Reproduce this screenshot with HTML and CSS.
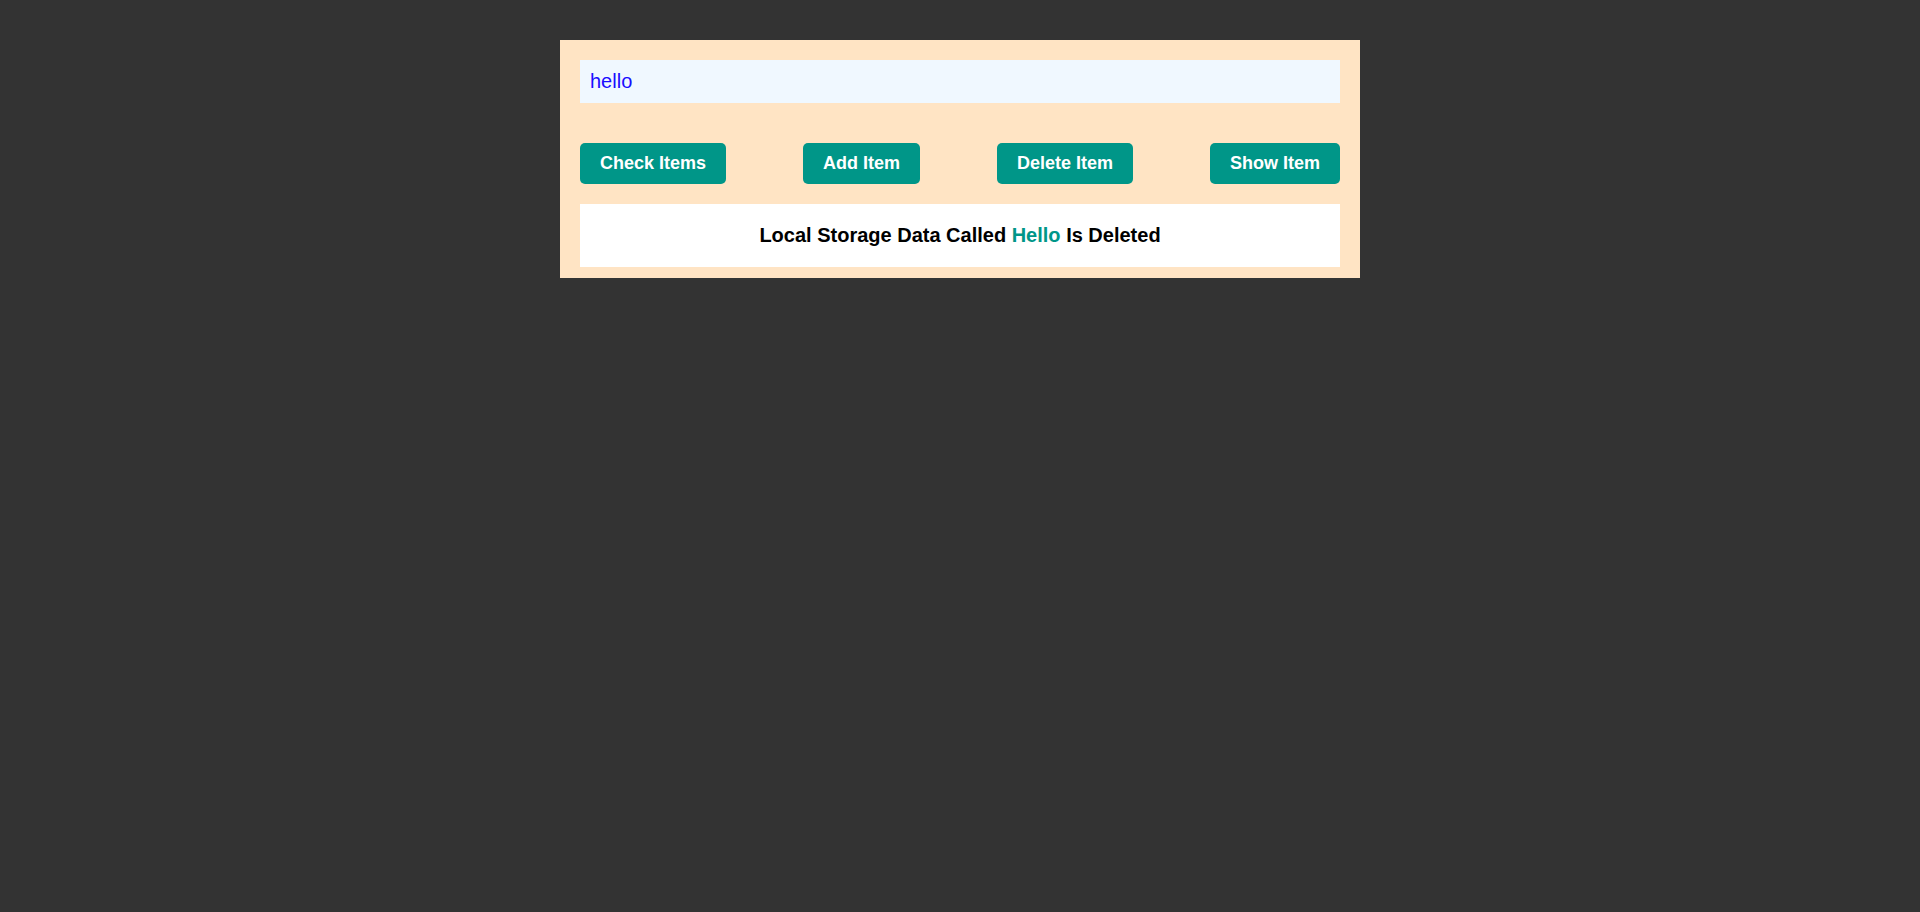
FILE: index.html
```html
<!DOCTYPE html>
<html>
<head>
<meta charset="utf-8">
<link rel="stylesheet" href="styles.css">
</head>
<body>
<div class="container">
  <input class="input" type="text" value="hello">
  <div class="buttons">
    <button class="btn btn-check">Check Items</button>
    <button class="btn btn-add">Add Item</button>
    <button class="btn btn-delete">Delete Item</button>
    <button class="btn btn-show">Show Item</button>
  </div>
  <div class="results">Local Storage Data Called <span class="key">Hello</span> Is Deleted</div>
</div>
</body>
</html>
```
FILE: styles.css
```css
* { box-sizing: border-box; }
html, body { margin: 0; padding: 0; }
body {
  background: #333333;
  font-family: "Liberation Sans", Arial, sans-serif;
  min-height: 912px;
}
.container {
  width: 800px;
  margin: 40px auto 0;
  background: #ffe4c4;
  padding: 20px 20px 11px;
}
.input {
  display: block;
  width: 100%;
  height: 43px;
  border: none;
  outline: none;
  background: #f0f8ff;
  color: #1a0dff;
  font-family: "Liberation Sans", Arial, sans-serif;
  font-size: 20px;
  padding: 0 10px;
  margin: 0 0 40px;
}
.buttons {
  display: flex;
  justify-content: space-between;
  margin-bottom: 20px;
}
.btn {
  height: 41px;
  border: none;
  border-radius: 5px;
  background: #009688;
  color: #ffffff;
  font-family: "Liberation Sans", Arial, sans-serif;
  font-weight: bold;
  font-size: 18px;
  padding: 0 20px;
}
.results {
  background: #ffffff;
  height: 63px;
  display: flex;
  align-items: center;
  justify-content: center;
  font-weight: bold;
  font-size: 20px;
  color: #000;
  white-space: pre;
}
.key { color: #009688; }
```
